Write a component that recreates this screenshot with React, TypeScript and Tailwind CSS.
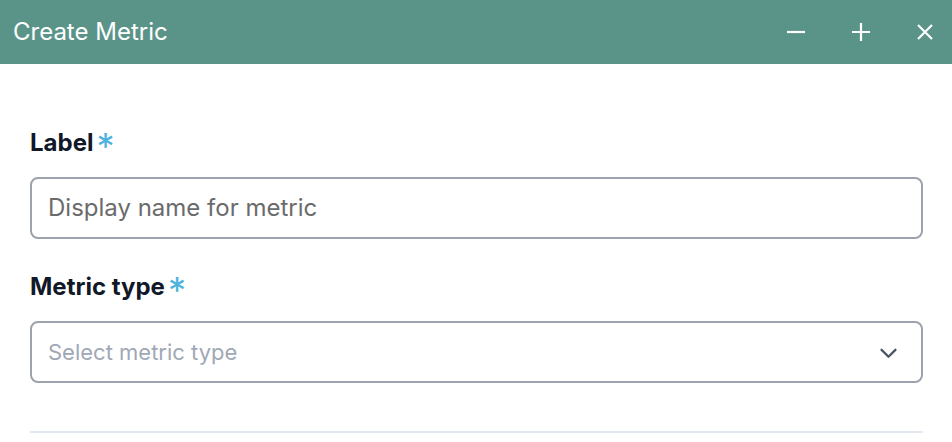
import React from "react";

export default function App() {
  return (
    <div className="w-[952px] h-[442px] bg-white overflow-hidden" style={{ fontFamily: "Inter, 'Noto Sans', sans-serif" }}>
      <div className="h-16 bg-[#5a9489] flex items-center justify-between pl-[13px] pr-[18px]">
        <div className="text-white text-[24px] leading-none">Create Metric</div>
        <div className="flex items-center gap-[45px]">
          <svg width="20" height="20" viewBox="0 0 20 20" fill="none" stroke="white" strokeWidth="2.2">
            <path d="M1 10h18" />
          </svg>
          <svg width="20" height="20" viewBox="0 0 20 20" fill="none" stroke="white" strokeWidth="2.2">
            <path d="M1 10h18M10 1v18" />
          </svg>
          <svg width="18" height="18" viewBox="0 0 18 18" fill="none" stroke="white" strokeWidth="2.2">
            <path d="M2 2l14 14M16 2L2 16" />
          </svg>
        </div>
      </div>
      <div className="px-[30px] pr-[29px] pt-[65px]">
        <div className="flex items-center h-7 text-[24px] font-bold text-[#111827]">
          Label<span className="text-[#4fb3e0] text-[36px] font-normal ml-[3px] relative top-[3px]">*</span>
        </div>
        <div className="mt-5 h-[62px] border-2 border-[#9ca3af] rounded-lg flex items-center px-[16px]">
          <span className="text-[24px] text-[#6b6b6b]">Display name for metric</span>
        </div>
        <div className="mt-[34px] flex items-center h-7 text-[24px] font-bold text-[#111827]">
          Metric type<span className="text-[#4fb3e0] text-[36px] font-normal ml-[3px] relative top-[3px]">*</span>
        </div>
        <div className="mt-5 h-[62px] border-2 border-[#9ca3af] rounded-lg flex items-center justify-between pl-[16px] pr-[24px]">
          <span className="text-[22px] text-[#a0a8b5]">Select metric type</span>
          <svg width="17" height="17" viewBox="0 0 16 16" fill="none" stroke="#4b5563" strokeWidth="2.2" strokeLinecap="round" strokeLinejoin="round">
            <path d="M1.5 5.5l6.5 6.5l6.5-6.5" />
          </svg>
        </div>
        <div className="mt-[48px] h-[2px] bg-[#e2e8f0]" />
      </div>
    </div>
  );
}
